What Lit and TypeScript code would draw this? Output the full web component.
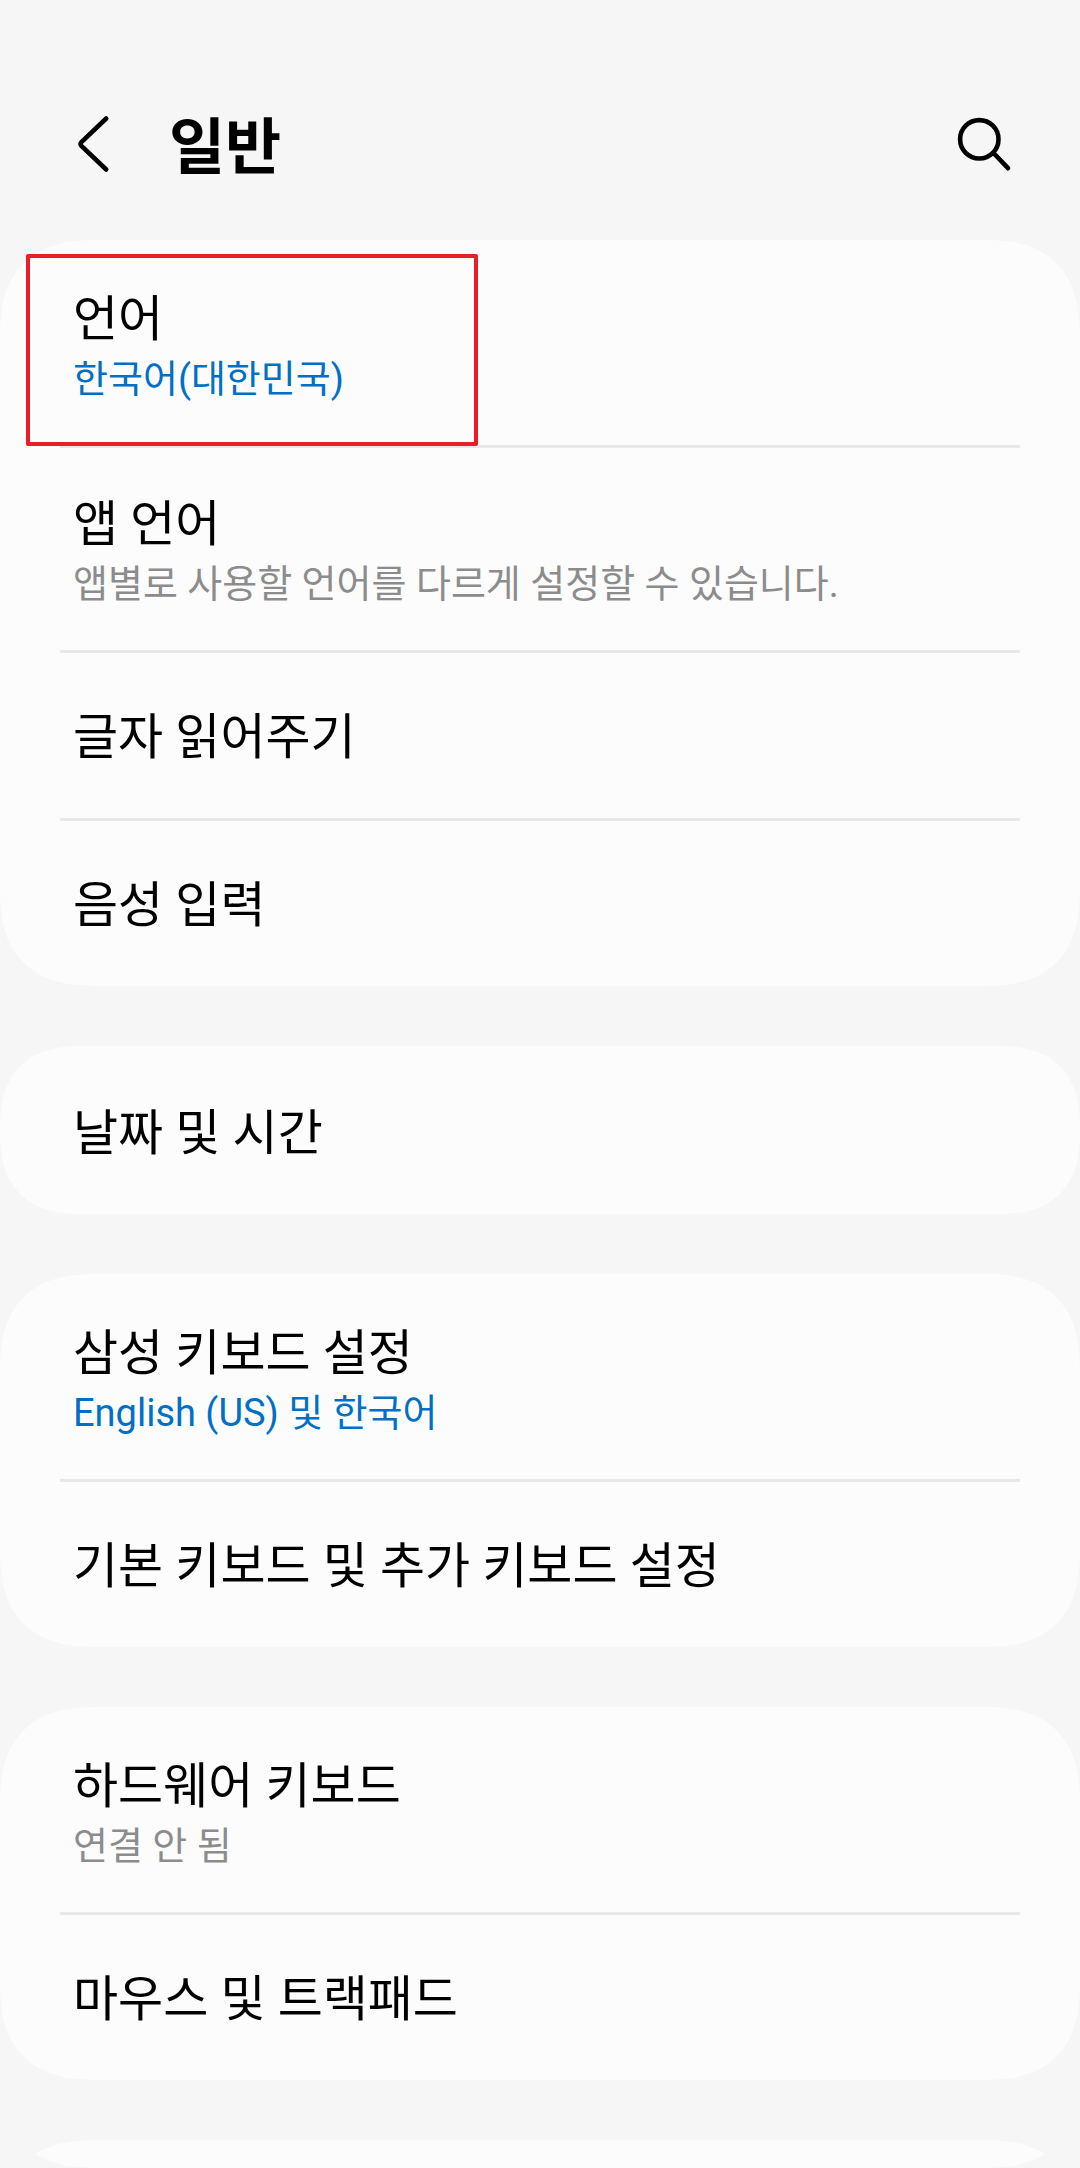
import { LitElement, html, css, nothing } from "lit";
import { customElement, property } from "lit/decorators.js";

interface Setting {
  label: string;
  note?: string;
  active?: boolean;
  marked?: boolean;
}

const GROUPS: Setting[][] = [
  [
    { label: "언어", note: "한국어(대한민국)", active: true, marked: true },
    { label: "앱 언어", note: "앱별로 사용할 언어를 다르게 설정할 수 있습니다." },
    { label: "글자 읽어주기" },
    { label: "음성 입력" },
  ],
  [{ label: "날짜 및 시간" }],
  [
    { label: "삼성 키보드 설정", note: "English (US) 및 한국어", active: true },
    { label: "기본 키보드 및 추가 키보드 설정" },
  ],
  [
    { label: "하드웨어 키보드", note: "연결 안 됨" },
    { label: "마우스 및 트랙패드" },
  ],
];

@customElement("setting-row")
class SettingRow extends LitElement {
  @property({ attribute: false }) item!: Setting;

  static styles = css`
    :host {
      display: block;
      position: relative;
    }
    .row {
      display: flex;
      flex-direction: column;
      justify-content: center;
      box-sizing: border-box;
      width: 100%;
      min-height: 165px;
      margin: 0;
      padding: 4px 73px 0;
      border: 0;
      background: none;
      color: #000;
      font: inherit;
      text-align: left;
      cursor: pointer;
    }
    .double {
      min-height: 202px;
    }
    .label {
      font-size: 49px;
      line-height: 66px;
    }
    .note {
      font-size: 38px;
      line-height: 52px;
      color: #8c8c8c;
    }
    .active {
      color: #0070c6;
    }
    .marker {
      position: absolute;
      top: 11px;
      left: 26px;
      bottom: -1px;
      width: 452px;
      box-sizing: border-box;
      border: 4px solid #e81f27;
      border-radius: 2px;
      pointer-events: none;
    }
  `;

  render() {
    const { label, note, active, marked } = this.item;
    return html`
      <button type="button" class="row ${note ? "double" : ""}">
        <span class="label">${label}</span>
        ${note
          ? html`<span class="note ${active ? "active" : ""}">${note}</span>`
          : nothing}
      </button>
      ${marked ? html`<div class="marker"></div>` : nothing}
    `;
  }
}

@customElement("app-root")
class AppRoot extends LitElement {
  static styles = css`
    :host {
      display: flex;
      flex-direction: column;
      height: 100vh;
      background: #f6f6f6;
      color: #000;
      font-family: Roboto, "Noto Sans CJK KR", sans-serif;
    }
    .bar {
      display: flex;
      flex: none;
      align-items: center;
      box-sizing: border-box;
      height: 240px;
      padding: 48px 60px 0;
    }
    .title {
      flex: 1;
      margin: 0;
      padding: 8px 0 0 49px;
      font-size: 61px;
      line-height: 84px;
      font-weight: 700;
    }
    .icon {
      flex: none;
      width: 60px;
      height: 60px;
      margin: 0;
      padding: 0;
      border: 0;
      background: none;
      cursor: pointer;
    }
    .icon svg {
      display: block;
      width: 60px;
      height: 60px;
      overflow: visible;
      fill: none;
      stroke: #000;
      stroke-width: 4.6;
      stroke-linecap: round;
      stroke-linejoin: round;
    }
    .list {
      display: flex;
      flex-direction: column;
      flex: 1;
      gap: 60px;
      min-height: 0;
      overflow: hidden;
      border-radius: 0 0 80px 80px;
    }
    .card {
      flex: none;
      margin: 0;
      padding: 3px 0 0;
      list-style: none;
      background: #fcfcfc;
      border-radius: 80px;
    }
    .next {
      min-height: 165px;
    }
    @supports (corner-shape: superellipse(1.34)) {
      .list {
        border-radius: 0 0 98px 98px;
        corner-shape: superellipse(1.34);
      }
      .card {
        border-radius: 98px;
        corner-shape: superellipse(1.34);
      }
      .next {
        min-height: 195px;
      }
    }
    .entry:not(:last-child)::after {
      content: "";
      display: block;
      height: 3px;
      margin: 0 60px;
      background: #e8e8e8;
    }
  `;

  render() {
    return html`
      <header class="bar">
        <button type="button" class="icon" aria-label="뒤로">
          <svg viewBox="0 0 60 60" aria-hidden="true">
            <path d="M46.2 4.5 21.4 28.2Q19.6 30 21.4 31.8L46.2 55.5" />
          </svg>
        </button>
        <h1 class="title">일반</h1>
        <button type="button" class="icon" aria-label="검색">
          <svg viewBox="0 0 60 60" aria-hidden="true">
            <circle cx="19.3" cy="25.3" r="19.2" />
            <path d="M33.5 39 48 54.2" />
          </svg>
        </button>
      </header>
      <main class="list">
        ${GROUPS.map(
          (group) => html`
            <ul class="card">
              ${group.map(
                (item) => html`
                  <li class="entry"><setting-row .item=${item}></setting-row></li>
                `
              )}
            </ul>
          `
        )}
        <div class="card next"></div>
      </main>
    `;
  }
}
